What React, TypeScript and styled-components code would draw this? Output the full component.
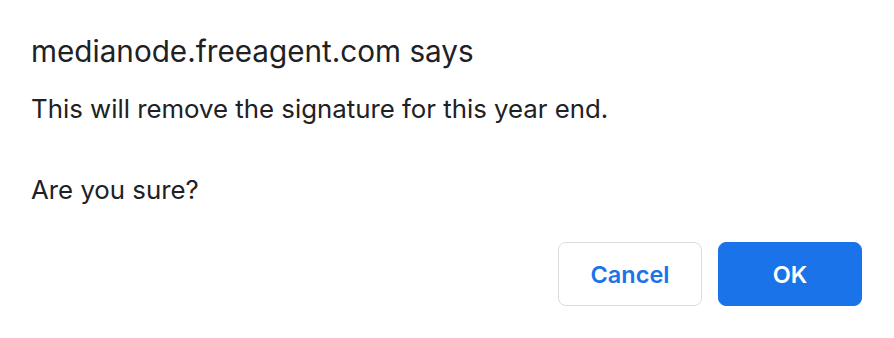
import styled, { createGlobalStyle } from "styled-components";

const GlobalStyle = createGlobalStyle`
  html, body {
    margin: 0;
    padding: 0;
    background: #ffffff;
  }
  body {
    font-family: Inter, "Noto Sans", "Liberation Sans", sans-serif;
    -webkit-font-smoothing: antialiased;
  }
`;

const Dialog = styled.div`
  box-sizing: border-box;
  width: 894px;
  height: 338px;
  padding: 32px 32px 32px 31px;
  display: flex;
  flex-direction: column;
  background: #ffffff;
  border-radius: 8px;
  color: #202124;
`;

const Title = styled.h1`
  margin: 1px 0 0;
  font-size: 29.7px;
  font-weight: 400;
  line-height: 36px;
`;

const Message = styled.p`
  margin: 0;
  font-size: 25.8px;
  line-height: 32px;
`;

const Body = styled.div`
  margin-top: 24px;
  display: flex;
  flex-direction: column;
  gap: 49px;
`;

const Actions = styled.div`
  margin-top: auto;
  display: flex;
  justify-content: flex-end;
  gap: 16px;
`;

const Button = styled.button<{ primary?: boolean }>`
  box-sizing: border-box;
  width: 144px;
  height: 64px;
  border-radius: 8px;
  font-family: inherit;
  font-size: 23.5px;
  font-weight: 600;
  cursor: pointer;
  border: 1px solid ${(p) => (p.primary ? "#1a73e8" : "#dadce0")};
  background: ${(p) => (p.primary ? "#1a73e8" : "#ffffff")};
  color: ${(p) => (p.primary ? "#ffffff" : "#1a73e8")};
`;

function App() {
  return (
    <>
      <GlobalStyle />
      <Dialog>
        <Title>medianode.freeagent.com says</Title>
        <Body>
          <Message>This will remove the signature for this year end.</Message>
          <Message>Are you sure?</Message>
        </Body>
        <Actions>
          <Button>Cancel</Button>
          <Button primary>OK</Button>
        </Actions>
      </Dialog>
    </>
  );
}

export default App;
